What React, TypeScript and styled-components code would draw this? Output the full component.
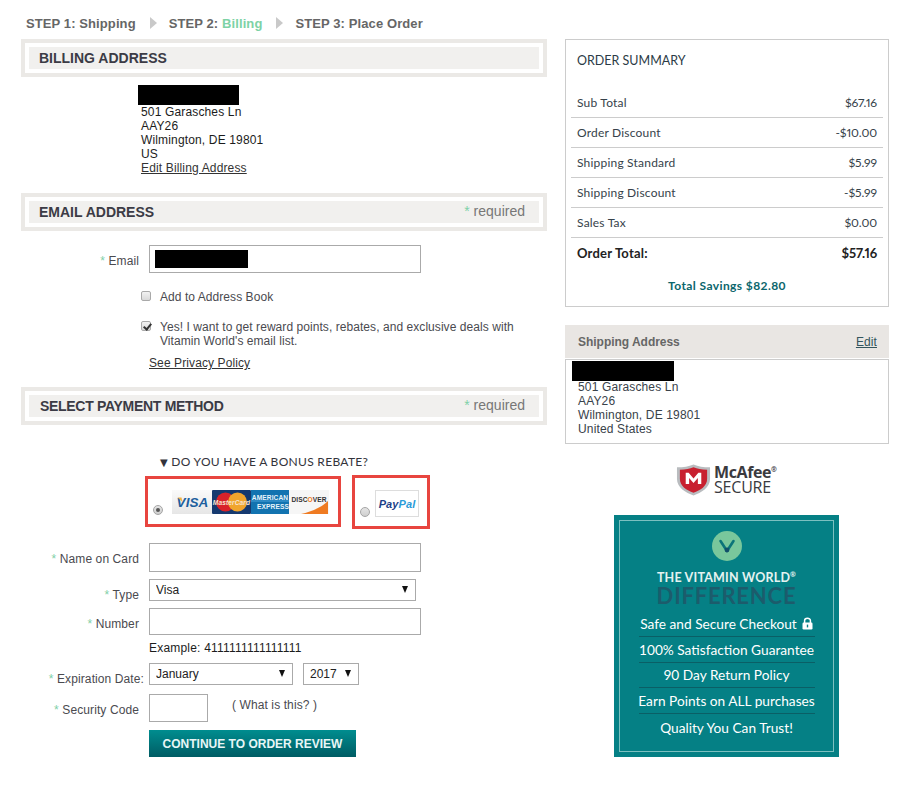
import React from "react";
import styled, { createGlobalStyle } from "styled-components";

const GlobalStyle = createGlobalStyle`
	html, body {
		margin: 0;
		padding: 0;
		background: #fff;
		font-family: "Liberation Sans", Arial, sans-serif;
		font-size: 12px;
		color: #222;
	}
`;

const summaryRows = [
	{ name: "Sub Total", value: "$67.16" },
	{ name: "Order Discount", value: "-$10.00" },
	{ name: "Shipping Standard", value: "$5.99" },
	{ name: "Shipping Discount", value: "-$5.99" },
	{ name: "Sales Tax", value: "$0.00" },
];

const differenceRows = [
	"100% Satisfaction Guarantee",
	"90 Day Return Policy",
	"Earn Points on ALL purchases",
	"Quality You Can Trust!",
];

const SectionHeader = ({ title, required, $indent, $tight }: { title: string; required?: boolean; $indent?: number; $tight?: boolean }) => (
	<SectionFrame>
		<SectionInner $indent={$indent}>
			<SectionTitle $tight={$tight}>{title}</SectionTitle>
			{required && (
				<RequiredNote>
					<Star>*</Star> required
				</RequiredNote>
			)}
		</SectionInner>
	</SectionFrame>
);

const Select = ({ value, width }: { value: string; width: number }) => (
	<SelectWrap $width={width}>
		<NativeSelect defaultValue={value}>
			<option>{value}</option>
		</NativeSelect>
	</SelectWrap>
);

const VisaCard = () => (
	<svg width="40" height="24" viewBox="0 0 40 24">
		<defs>
			<linearGradient id="visaBg" x1="0" y1="0" x2="0" y2="1">
				<stop offset="0" stopColor="#fafafa" />
				<stop offset="1" stopColor="#e6e6e6" />
			</linearGradient>
		</defs>
		<rect width="40" height="24" fill="url(#visaBg)" />
		<text x="20.5" y="17" textAnchor="middle" fontFamily="Liberation Sans" fontWeight="700" fontStyle="italic" fontSize="13.5" fill="#1d5f9e">VISA</text>
		<path d="M5.5 7.5 L9.5 7.5 L10.5 12 Z" fill="#eeb244" />
	</svg>
);

const MasterCard = () => (
	<svg width="39" height="24" viewBox="0 0 39 24">
		<rect width="39" height="24" rx="1" fill="#15396f" />
		<circle cx="13.5" cy="12" r="9.5" fill="#d8222a" />
		<circle cx="25.5" cy="12" r="9.5" fill="#f0a52d" />
		<text x="19.5" y="14.5" textAnchor="middle" fontFamily="Liberation Sans" fontWeight="700" fontStyle="italic" fontSize="6.6" fill="#f7e4d0">MasterCard</text>
	</svg>
);

const AmexCard = () => (
	<svg width="38" height="24" viewBox="0 0 38 24">
		<rect width="38" height="24" fill="#1273b0" />
		<rect y="10" width="38" height="2" fill="#2d8ac4" />
		<text x="19" y="10" textAnchor="middle" fontFamily="Liberation Sans" fontWeight="700" fontSize="6.6" fill="#e8f3fa">AMERICAN</text>
		<text x="22" y="19" textAnchor="middle" fontFamily="Liberation Sans" fontWeight="700" fontSize="6.6" fill="#e8f3fa">EXPRESS</text>
	</svg>
);

const DiscoverCard = () => (
	<svg width="40" height="24" viewBox="0 0 40 24">
		<rect width="40" height="24" fill="#f6f6f6" />
		<path d="M12 24 C22 22 33 17 39 11 L39 24 Z" fill="#ef7b22" />
		<text x="20" y="12" textAnchor="middle" fontFamily="Liberation Sans" fontWeight="700" fontSize="6.6" fill="#333">
			DISC<tspan fill="#ef7b22">O</tspan>VER
		</text>
	</svg>
);

const PayPalLogo = () => (
	<svg width="38" height="14" viewBox="0 0 38 14">
		<text x="19" y="11" textAnchor="middle" fontFamily="Liberation Sans" fontWeight="700" fontStyle="italic" fontSize="11">
			<tspan fill="#1d3f87">Pay</tspan>
			<tspan fill="#2b9bd8">Pal</tspan>
		</text>
	</svg>
);

const McAfeeShield = () => (
	<svg width="35" height="34" viewBox="0 0 36 34">
		<path d="M1 4 C8 4 13 3 18 1 C23 3 28 4 35 4 L35 16 C35 25 26 30 18 33 C10 30 1 25 1 16 Z" fill="#b9bcbf" />
		<path d="M4 6.5 C10 6.5 14 5.5 18 4 C22 5.5 26 6.5 32 6.5 L32 16 C32 23.5 25 27.5 18 30 C11 27.5 4 23.5 4 16 Z" fill="#c8202f" />
		<path d="M10 21 L10 9.5 L13 9.5 L18 15.5 L23 9.5 L26 9.5 L26 21 L22.5 21 L22.5 15 L18 20 L13.5 15 L13.5 21 Z" fill="#fff" />
	</svg>
);

const VitaminMark = () => (
	<svg width="30" height="30" viewBox="0 0 30 30">
		<circle cx="15" cy="15" r="15" fill="#79c79c" />
		<path d="M8.5 10 L15 20 L21.5 10" fill="none" stroke="#0b7479" strokeWidth="2.6" strokeLinecap="round" strokeLinejoin="round" />
		<circle cx="15" cy="19" r="2.4" fill="#11506a" />
	</svg>
);

const LockIcon = () => (
	<svg width="11" height="13" viewBox="0 0 11 13">
		<path d="M2.6 6 L2.6 3.6 C2.6 0.4 8.4 0.4 8.4 3.6 L8.4 6" fill="none" stroke="#fff" strokeWidth="1.5" />
		<rect x="0.5" y="5.5" width="10" height="7" rx="1.2" fill="#fff" />
		<rect x="4.8" y="7.6" width="1.4" height="2.8" fill="#058085" />
	</svg>
);

export default function App() {
	return (
		<Page>
			<GlobalStyle />
			<LeftColumn>
				<Steps>
					<span>STEP 1: Shipping</span>
					<StepArrow />
					<span>
						STEP 2: <StepActive>Billing</StepActive>
					</span>
					<StepArrow />
					<span>STEP 3: Place Order</span>
				</Steps>

				<SectionHeader title="BILLING ADDRESS" />
				<AddressBlock>
					<Redacted $width={101} />
					<div>501 Garasches Ln</div>
					<div>AAY26</div>
					<div>Wilmington, DE 19801</div>
					<div>US</div>
					<PlainLink href="#">Edit Billing Address</PlainLink>
				</AddressBlock>

				<SectionHeader title="EMAIL ADDRESS" required />
				<FieldRow $top={14}>
					<FieldLabel>
						<Star>*</Star> Email
					</FieldLabel>
					<EmailWrap>
						<TextInput $width={272} $height={28} />
						<EmailMask />
					</EmailWrap>
				</FieldRow>

				<CheckRow $top={17}>
					<CheckBox type="checkbox" />
					<CheckText>Add to Address Book</CheckText>
				</CheckRow>
				<CheckRow $top={16}>
					<CheckBox type="checkbox" defaultChecked />
					<CheckText>
						Yes! I want to get reward points, rebates, and exclusive deals with
						<br />
						Vitamin World's email list.
					</CheckText>
				</CheckRow>
				<PrivacyLine>
					<PlainLink href="#">See Privacy Policy</PlainLink>
				</PrivacyLine>

				<SectionHeader title="SELECT PAYMENT METHOD" required $indent={11} $tight />

				<Rebate>
					<RebateArrow>▼</RebateArrow> DO YOU HAVE A BONUS REBATE?
				</Rebate>

				<Methods>
					<MethodBox $width={196} $height={51} $top={1}>
						<Radio type="radio" name="method" defaultChecked />
						<CardRow>
							<VisaCard />
							<MasterCard />
							<AmexCard />
							<DiscoverCard />
						</CardRow>
					</MethodBox>
					<MethodBox $width={78} $height={54}>
						<Radio type="radio" name="method" />
						<PayPalBox>
							<PayPalLogo />
						</PayPalBox>
					</MethodBox>
				</Methods>

				<FieldRow $top={14}>
					<FieldLabel>
						<Star>*</Star> Name on Card
					</FieldLabel>
					<TextInput $width={272} $height={29} />
				</FieldRow>
				<FieldRow $top={7}>
					<FieldLabel>
						<Star>*</Star> Type
					</FieldLabel>
					<Select value="Visa" width={267} />
				</FieldRow>
				<FieldRow $top={7}>
					<FieldLabel>
						<Star>*</Star> Number
					</FieldLabel>
					<TextInput $width={272} $height={27} />
				</FieldRow>
				<ExampleLine>Example: 4111111111111111</ExampleLine>
				<FieldRow $top={8}>
					<FieldLabel $gutter={5}>
						<Star>*</Star> Expiration Date:
					</FieldLabel>
					<SelectGroup>
						<Select value="January" width={144} />
						<Select value="2017" width={56} />
					</SelectGroup>
				</FieldRow>
				<FieldRow $top={9}>
					<FieldLabel>
						<Star>*</Star> Security Code
					</FieldLabel>
					<SecurityGroup>
						<TextInput $width={59} $height={28} />
						<WhatIsThis>( What is this? )</WhatIsThis>
					</SecurityGroup>
				</FieldRow>
				<ButtonLine>
					<ContinueButton type="button">CONTINUE TO ORDER REVIEW</ContinueButton>
				</ButtonLine>
			</LeftColumn>

			<RightColumn>
				<Summary>
					<SummaryTitle>ORDER SUMMARY</SummaryTitle>
					{summaryRows.map((row) => (
						<SummaryRow key={row.name}>
							<span>{row.name}</span>
							<span>{row.value}</span>
						</SummaryRow>
					))}
					<SummaryTotal>
						<span>Order Total:</span>
						<span>$57.16</span>
					</SummaryTotal>
					<Savings>Total Savings $82.80</Savings>
				</Summary>

				<ShipHead>
					<ShipTitle>Shipping Address</ShipTitle>
					<ShipEdit href="#">Edit</ShipEdit>
				</ShipHead>
				<ShipBody>
					<Redacted $width={102} />
					<ShipLines>
						<div>501 Garasches Ln</div>
						<div>AAY26</div>
						<div>Wilmington, DE 19801</div>
						<div>United States</div>
					</ShipLines>
				</ShipBody>

				<McAfee>
					<McAfeeShield />
					<McAfeeWords>
						<McAfeeName>
							McAfee<McAfeeReg>®</McAfeeReg>
						</McAfeeName>
						<McAfeeSecure>SECURE</McAfeeSecure>
					</McAfeeWords>
				</McAfee>

				<Difference>
					<DifferenceInner>
						<VitaminMark />
						<DifferenceKicker>
							THE VITAMIN WORLD<sup>®</sup>
						</DifferenceKicker>
						<DifferenceTitle>DIFFERENCE</DifferenceTitle>
						<DifferenceList>
							<DifferenceItem>
								Safe and Secure Checkout <LockIcon />
							</DifferenceItem>
							{differenceRows.map((row) => (
								<DifferenceItem key={row}>{row}</DifferenceItem>
							))}
						</DifferenceList>
					</DifferenceInner>
				</Difference>
			</RightColumn>
		</Page>
	);
}

const Page = styled.div`
	display: flex;
	gap: 18px;
	padding-left: 21px;
	width: 893px;
	height: 785px;
	box-sizing: border-box;
	overflow: hidden;
	letter-spacing: 0.1px;
`;

const LeftColumn = styled.div`
	display: flex;
	flex-direction: column;
	width: 526px;
`;

const RightColumn = styled.div`
	display: flex;
	flex-direction: column;
	width: 324px;
	padding-top: 39px;
`;

const Steps = styled.div`
	display: flex;
	align-items: center;
	height: 16px;
	margin: 15px 0 8px 5px;
	font-size: 13px;
	font-weight: 700;
	letter-spacing: 0.1px;
	color: #666;
`;

const StepArrow = styled.i`
	width: 0;
	height: 0;
	margin: 0 12px 0 14px;
	border-left: 7px solid #c9c9c9;
	border-top: 6px solid transparent;
	border-bottom: 6px solid transparent;
`;

const StepActive = styled.span`
	color: #7dd2a5;
`;

const SectionFrame = styled.div`
	border: 4px solid #ebe9e6;
	padding: 4px;
	height: 38px;
	box-sizing: border-box;
`;

const SectionInner = styled.div<{ $indent?: number }>`
	display: flex;
	align-items: center;
	justify-content: space-between;
	height: 22px;
	padding: 0 14px 0 ${({ $indent }) => $indent ?? 10}px;
	background: #f1f0ee;
`;

const SectionTitle = styled.div<{ $tight?: boolean }>`
	font-size: 14px;
	font-weight: 700;
	letter-spacing: ${({ $tight }) => ($tight ? "-0.3px" : "0")};
	color: #3b3b45;
`;

const RequiredNote = styled.div`
	font-size: 14px;
	letter-spacing: 0;
	color: #777;
	margin-top: -2px;
`;

const Star = styled.span`
	color: #7fd0a8;
`;

const Redacted = styled.div<{ $width: number }>`
	width: ${({ $width }) => $width}px;
	height: 20px;
	background: #000;
`;

const AddressBlock = styled.div`
	display: flex;
	flex-direction: column;
	align-items: flex-start;
	margin: 8px 0 18px 120px;
	line-height: 14px;
	letter-spacing: 0.15px;
	color: #1c1c1c;

	${Redacted} {
		margin-left: -3px;
	}
`;

const PlainLink = styled.a`
	color: #333;
	text-decoration: underline;
`;

const FieldRow = styled.div<{ $top: number }>`
	display: grid;
	grid-template-columns: 128px 1fr;
	align-items: start;
	margin-top: ${({ $top }) => $top}px;
`;

const FieldLabel = styled.label<{ $gutter?: number }>`
	padding-top: 9px;
	margin-bottom: -1px;
	padding-right: ${({ $gutter }) => $gutter ?? 10}px;
	line-height: 14px;
	text-align: right;
	white-space: nowrap;
	color: #4a4a4f;
`;

const TextInput = styled.input<{ $width: number; $height: number }>`
	display: block;
	width: ${({ $width }) => $width}px;
	height: ${({ $height }) => $height}px;
	box-sizing: border-box;
	border: 1px solid #aaa;
	background: #fff;
	padding: 0 6px;
	outline: none;
`;

const EmailWrap = styled.div`
	position: relative;
`;

const EmailMask = styled.div`
	position: absolute;
	left: 6px;
	top: 5px;
	width: 93px;
	height: 18px;
	background: #000;
`;

const CheckRow = styled.div<{ $top: number }>`
	display: flex;
	align-items: flex-start;
	margin: ${({ $top }) => $top}px 0 0 120px;
	line-height: 14px;
	letter-spacing: 0.06px;
	color: #4a4a4f;
`;

const CheckBox = styled.input`
	appearance: none;
	position: relative;
	flex: none;
	width: 10px;
	height: 10px;
	margin: 1px 9px 0 0;
	border: 1px solid #a9a9a9;
	border-radius: 2px;
	background: linear-gradient(#f2f2f2, #d9d9d9);

	&:checked::after {
		content: "";
		position: absolute;
		left: 2.5px;
		top: 0;
		width: 3px;
		height: 6px;
		border: solid #333;
		border-width: 0 2px 2px 0;
		transform: rotate(40deg);
	}
`;

const CheckText = styled.div``;

const PrivacyLine = styled.div`
	margin: 8px 0 17px 128px;
	line-height: 14px;
`;

const Rebate = styled.div`
	margin: 30px 0 5px 139px;
	font-family: Lato, "Liberation Sans", sans-serif;
	font-size: 12px;
	line-height: 14px;
	letter-spacing: 0.3px;
	color: #33333b;
`;

const RebateArrow = styled.span`
	font-family: "DejaVu Sans", sans-serif;
	font-size: 10px;
`;

const Methods = styled.div`
	display: flex;
	align-items: flex-start;
	gap: 11px;
	margin-left: 124px;
`;

const MethodBox = styled.div<{ $width: number; $height: number; $top?: number }>`
	display: flex;
	align-items: flex-end;
	width: ${({ $width }) => $width}px;
	height: ${({ $height }) => $height}px;
	box-sizing: border-box;
	margin-top: ${({ $top }) => $top ?? 0}px;
	padding: 0 0 9px 5px;
	border: 3px solid #e8453f;
`;

const Radio = styled.input`
	appearance: none;
	flex: none;
	position: relative;
	width: 10px;
	height: 10px;
	margin: 0;
	border: 1px solid #a5a5a5;
	border-radius: 50%;
	background: linear-gradient(#e4e4e4, #cfcfcf);

	&:checked::after {
		content: "";
		position: absolute;
		left: 2px;
		top: 2px;
		width: 4px;
		height: 4px;
		border-radius: 50%;
		background: #555;
	}
`;

const CardRow = styled.div`
	display: flex;
	height: 24px;
	margin: 0 0 1px 9px;

	svg {
		display: block;
	}
`;

const PayPalBox = styled.div`
	display: flex;
	align-items: center;
	justify-content: center;
	width: 44px;
	height: 27px;
	box-sizing: border-box;
	margin-left: 5px;
	border: 1px solid #ddd;
`;

const SelectWrap = styled.div<{ $width: number }>`
	position: relative;
	width: ${({ $width }) => $width}px;
	height: 22px;

	&::after {
		content: "";
		position: absolute;
		right: 8px;
		top: 7px;
		border-left: 3.5px solid transparent;
		border-right: 3.5px solid transparent;
		border-top: 7px solid #111;
		pointer-events: none;
	}
`;

const NativeSelect = styled.select`
	appearance: none;
	display: block;
	width: 100%;
	height: 100%;
	box-sizing: border-box;
	padding: 0 0 0 6px;
	border: 1px solid #aaa;
	border-radius: 0;
	background: #fff;
	font-family: "Liberation Sans", Arial, sans-serif;
	font-size: 12px;
	color: #222;
`;

const SelectGroup = styled.div`
	display: flex;
	gap: 10px;
`;

const SecurityGroup = styled.div`
	display: flex;
	align-items: center;
	gap: 24px;
`;

const WhatIsThis = styled.span`
	margin-top: -6px;
	color: #4a4a4f;
`;

const ExampleLine = styled.div`
	margin: 6px 0 0 128px;
	line-height: 14px;
	letter-spacing: 0.2px;
	color: #1c1c1c;
`;

const ButtonLine = styled.div`
	margin: 8px 0 0 128px;
`;

const ContinueButton = styled.button`
	display: block;
	width: 207px;
	height: 27px;
	padding: 0;
	border: 0;
	background: linear-gradient(#008d8f, #005c64);
	font-family: "Liberation Sans", Arial, sans-serif;
	font-size: 12px;
	font-weight: 700;
	color: #e8f6f6;
`;

const Summary = styled.div`
	display: flex;
	flex-direction: column;
	height: 268px;
	box-sizing: border-box;
	padding: 0 5px;
	border: 1px solid #ccc;
	font-family: Lato, "Liberation Sans", sans-serif;
	font-size: 12px;
	color: #36424a;
`;

const SummaryTitle = styled.div`
	height: 48px;
	padding: 14px 0 0 6px;
	box-sizing: border-box;
	font-size: 12.5px;
	line-height: 14px;
	letter-spacing: 0;
	color: #2b3b46;
`;

const SummaryRow = styled.div`
	display: flex;
	align-items: center;
	justify-content: space-between;
	height: 30px;
	box-sizing: border-box;
	padding: 0 6px;
	border-bottom: 1px solid #ccc;
	letter-spacing: 0.2px;

	span:last-child {
		letter-spacing: -0.1px;
		font-variant-numeric: proportional-nums;
	}
`;

const SummaryTotal = styled(SummaryRow)`
	border-bottom: 0;
	font-size: 13px;
	font-weight: 700;
	color: #222;
`;

const Savings = styled.div`
	padding-top: 10px;
	text-align: center;
	font-weight: 700;
	letter-spacing: 0.4px;
	color: #0b666c;
`;

const ShipHead = styled.div`
	display: flex;
	align-items: center;
	justify-content: space-between;
	height: 33px;
	margin-top: 18px;
	padding: 0 12px 0 13px;
	background: #e9e6e3;
`;

const ShipTitle = styled.div`
	font-weight: 700;
	letter-spacing: -0.03px;
	color: #666;
`;

const ShipEdit = styled.a`
	color: #33555c;
	text-decoration: underline;
`;

const ShipBody = styled.div`
	height: 85px;
	box-sizing: border-box;
	margin-top: 1px;
	padding: 1px 0 0 6px;
	border: 1px solid #ccc;
`;

const ShipLines = styled.div`
	margin: -1px 0 0 6px;
	line-height: 14px;
	letter-spacing: 0.15px;
	color: #39424a;
`;

const McAfee = styled.div`
	display: flex;
	align-items: center;
	gap: 3px;
	height: 36px;
	margin-top: 18px;
	padding-left: 111px;

	svg {
		flex: none;
	}
`;

const McAfeeWords = styled.div`
	display: flex;
	flex-direction: column;
	margin-top: -2px;
	font-family: "Open Sans", "Liberation Sans", sans-serif;
	color: #3a3a3e;
`;

const McAfeeName = styled.div`
	font-size: 16px;
	font-weight: 700;
	line-height: 15px;
	letter-spacing: -0.4px;
`;

const McAfeeReg = styled.span`
	font-size: 7px;
	vertical-align: top;
	line-height: 10px;
`;

const McAfeeSecure = styled.div`
	font-size: 16px;
	line-height: 14px;
	letter-spacing: -0.2px;
`;

const Difference = styled.div`
	width: 225px;
	height: 242px;
	box-sizing: border-box;
	margin: 17px 0 0 49px;
	padding: 5px;
	background: #058085;
`;

const DifferenceInner = styled.div`
	display: flex;
	flex-direction: column;
	align-items: center;
	height: 100%;
	box-sizing: border-box;
	padding-top: 10px;
	border: 1px solid #7cc0c0;
	font-family: Lato, "Liberation Sans", sans-serif;
	color: #fff;

	svg {
		display: block;
		flex: none;
	}
`;

const DifferenceKicker = styled.div`
	margin-top: 10px;
	font-size: 12.5px;
	line-height: 14px;
	font-weight: 700;
	letter-spacing: 0.2px;
	color: #e4f3f1;

	sup {
		font-size: 7px;
		line-height: 0;
	}
`;

const DifferenceTitle = styled.div`
	margin-top: 2px;
	font-size: 22px;
	line-height: 18px;
	letter-spacing: 0.8px;
	font-weight: 700;
	color: #1c5c6c;
`;

const DifferenceList = styled.div`
	width: 176px;
	margin-top: 6px;
`;

const DifferenceItem = styled.div`
	display: flex;
	align-items: center;
	justify-content: center;
	gap: 5px;
	height: 25.8px;
	box-sizing: border-box;
	border-bottom: 1px solid #0a5f66;
	font-size: 13.7px;
	font-weight: 400;
	letter-spacing: 0;
	white-space: nowrap;

	&:last-child {
		border-bottom: 0;
	}
`;
